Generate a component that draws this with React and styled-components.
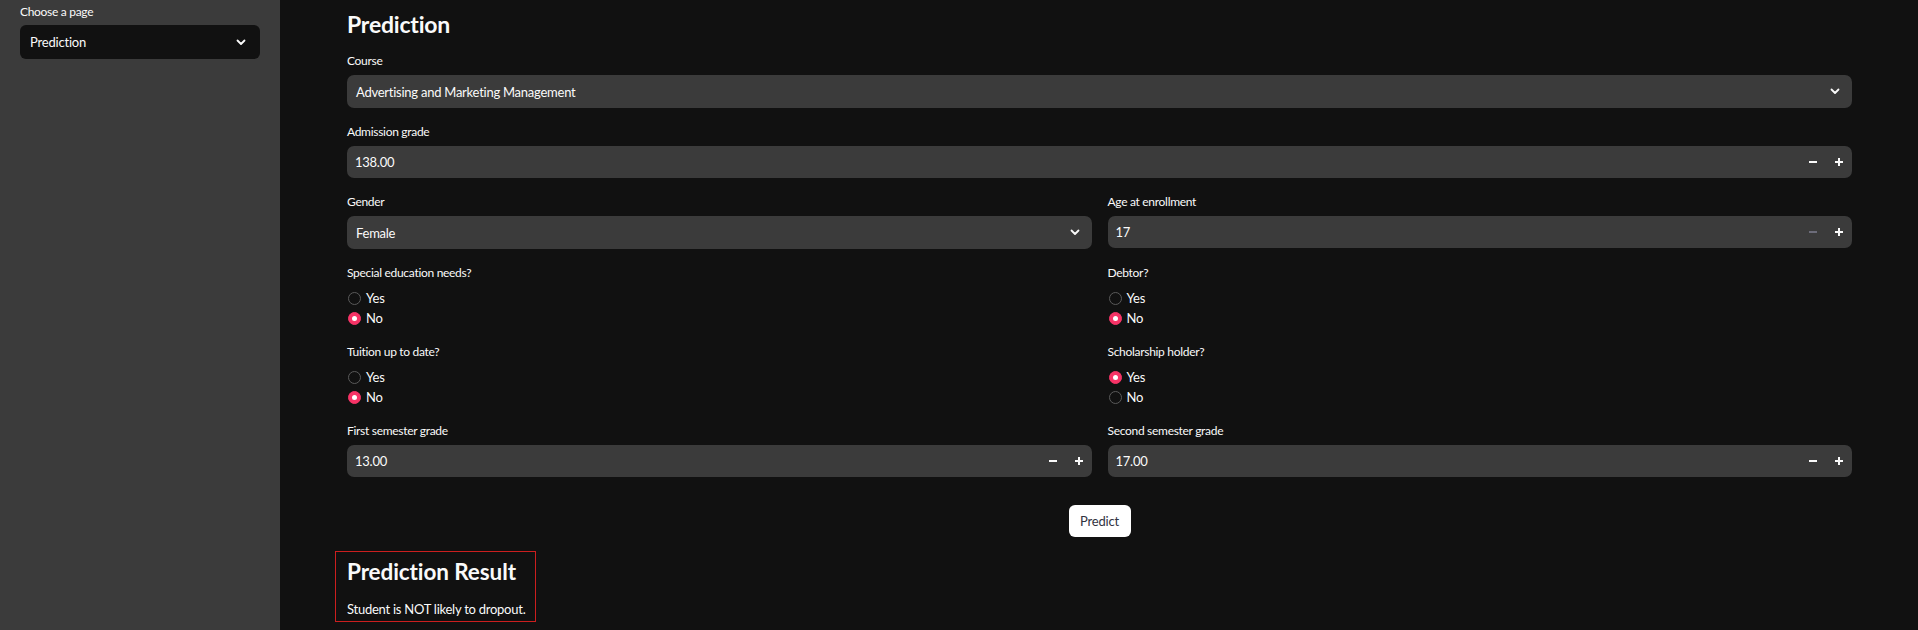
import React from "react";
import styled, { createGlobalStyle } from "styled-components";

const Global = createGlobalStyle`
  html, body { margin: 0; padding: 0; background: #111111; }
  body { font-family: "Lato", "Open Sans", sans-serif; color: #fafafa; }
  * { box-sizing: border-box; }
`;

const Shell = styled.div`
  display: flex;
  min-height: 630px;
`;

const Sidebar = styled.aside`
  width: 280px;
  flex: 0 0 280px;
  background: #3b3b3b;
  padding: 2px 20px 0 20px;
`;

const SideLabel = styled.div`
  font-size: 12px;
  letter-spacing: -0.3px;
  line-height: 20px;
  color: #fafafa;
`;

const SideSelect = styled.div`
  margin-top: 3px;
  height: 34px;
  border-radius: 6px;
  background: #111111;
  display: flex;
  align-items: center;
  justify-content: space-between;
  padding: 0 14px 0 10px;
  font-size: 13px;
  letter-spacing: -0.2px;
`;

const Main = styled.main`
  flex: 1;
  padding: 6px 66px 8px 67px;
  display: flex;
  flex-direction: column;
`;

const Title = styled.h1`
  margin: 0 0 9px 0;
  font-size: 23px;
  letter-spacing: -0.2px;
  line-height: 36px;
  font-weight: 700;
`;

const Form = styled.div`
  display: flex;
  flex-direction: column;
  gap: 14px;
`;

const Row = styled.div`
  display: grid;
  grid-template-columns: 1fr 1fr;
  column-gap: 16px;
`;

const FieldBox = styled.div`
  display: flex;
  flex-direction: column;
`;

const Label = styled.label`
  font-size: 12px;
  letter-spacing: -0.3px;
  line-height: 20px;
  margin-bottom: ${(p) => (p.$radio ? 5 : 4)}px;
`;

const SelectBox = styled.div`
  height: 33px;
  border-radius: 7px;
  background: #3b3b3b;
  display: flex;
  align-items: center;
  justify-content: space-between;
  padding: 0 12px 0 9px;
  font-size: 13px;
  letter-spacing: -0.25px;
`;

const NumberBox = styled.div`
  height: 32px;
  border-radius: 7px;
  background: #3b3b3b;
  display: flex;
  align-items: center;
  padding-left: 8px;
  font-size: 13px;
  letter-spacing: -0.25px;
`;

const NumberValue = styled.span`
  flex: 1;
`;

const Step = styled.span`
  width: 26px;
  height: 32px;
  display: flex;
  align-items: center;
  justify-content: center;
`;

const RadioList = styled.div`
  display: flex;
  flex-direction: column;
`;

const RadioRow = styled.div`
  display: flex;
  align-items: center;
  height: 20px;
  gap: 5px;
  font-size: 13px;
  letter-spacing: -0.2px;
  padding-left: 1px;
`;

const Dot = styled.span`
  width: 13px;
  height: 13px;
  border-radius: 50%;
  flex: 0 0 13px;
  background: ${(p) => (p.$on ? "#f63366" : "#111111")};
  border: 1px solid ${(p) => (p.$on ? "#f63366" : "#5a5a5a")};
  display: flex;
  align-items: center;
  justify-content: center;
  &::after {
    content: "";
    width: 5px;
    height: 5px;
    border-radius: 50%;
    background: #ffffff;
    display: ${(p) => (p.$on ? "block" : "none")};
  }
`;

const ButtonRow = styled.div`
  display: flex;
  justify-content: center;
  margin-top: 28px;
`;

const Button = styled.button`
  height: 32px;
  width: 62px;
  border: none;
  border-radius: 6px;
  background: #ffffff;
  color: #31333f;
  font-family: inherit;
  font-size: 13px;
  letter-spacing: -0.2px;
  padding: 0;
`;

const ResultBox = styled.div`
  align-self: flex-start;
  margin: 14px 0 0 -12px;
  border: 1px solid #cc1f1f;
  padding: 4px 10px 3px 11px;
  height: 71px;
`;

const ResultTitle = styled.h2`
  margin: 0;
  font-size: 22.5px;
  letter-spacing: -0.1px;
  line-height: 32px;
  font-weight: 700;
  white-space: nowrap;
`;

const ResultText = styled.p`
  margin: 12px 0 0 0;
  font-size: 13px;
  letter-spacing: -0.25px;
  line-height: 18px;
  white-space: nowrap;
`;

const Chevron = () => (
  <svg width="10" height="7" viewBox="0 0 10 7" fill="none">
    <path d="M1.5 1.5 L5 5 L8.5 1.5" stroke="#fafafa" strokeWidth="1.8" strokeLinecap="round" strokeLinejoin="round" />
  </svg>
);

const Minus = ({ color }) => (
  <svg width="8" height="8" viewBox="0 0 8 8"><rect x="0" y="3" width="8" height="2" fill={color} /></svg>
);
const Plus = ({ color }) => (
  <svg width="8" height="8" viewBox="0 0 8 8"><rect x="0" y="3" width="8" height="2" fill={color} /><rect x="3" y="0" width="2" height="8" fill={color} /></svg>
);

const Select = ({ label, value }) => (
  <FieldBox>
    <Label>{label}</Label>
    <SelectBox>
      <span>{value}</span>
      <Chevron />
    </SelectBox>
  </FieldBox>
);

const NumberInput = ({ label, value, minDisabled }) => (
  <FieldBox>
    <Label>{label}</Label>
    <NumberBox>
      <NumberValue>{value}</NumberValue>
      <Step><Minus color={minDisabled ? "#6c6c7a" : "#fafafa"} /></Step>
      <Step><Plus color="#fafafa" /></Step>
    </NumberBox>
  </FieldBox>
);

const Radio = ({ label, options, selected }) => (
  <FieldBox>
    <Label $radio>{label}</Label>
    <RadioList>
      {options.map((o) => (
        <RadioRow key={o}>
          <Dot $on={o === selected} />
          <span>{o}</span>
        </RadioRow>
      ))}
    </RadioList>
  </FieldBox>
);

export default function App() {
  return (
    <>
      <Global />
      <Shell>
        <Sidebar>
          <SideLabel>Choose a page</SideLabel>
          <SideSelect>
            <span>Prediction</span>
            <Chevron />
          </SideSelect>
        </Sidebar>
        <Main>
          <Title>Prediction</Title>
          <Form>
            <Select label="Course" value="Advertising and Marketing Management" />
            <NumberInput label="Admission grade" value="138.00" />
            <Row>
              <Select label="Gender" value="Female" />
              <NumberInput label="Age at enrollment" value="17" minDisabled />
            </Row>
            <Row>
              <Radio label="Special education needs?" options={["Yes", "No"]} selected="No" />
              <Radio label="Debtor?" options={["Yes", "No"]} selected="No" />
            </Row>
            <Row>
              <Radio label="Tuition up to date?" options={["Yes", "No"]} selected="No" />
              <Radio label="Scholarship holder?" options={["Yes", "No"]} selected="Yes" />
            </Row>
            <Row>
              <NumberInput label="First semester grade" value="13.00" />
              <NumberInput label="Second semester grade" value="17.00" />
            </Row>
          </Form>
          <ButtonRow>
            <Button>Predict</Button>
          </ButtonRow>
          <ResultBox>
            <ResultTitle>Prediction Result</ResultTitle>
            <ResultText>Student is NOT likely to dropout.</ResultText>
          </ResultBox>
        </Main>
      </Shell>
    </>
  );
}
